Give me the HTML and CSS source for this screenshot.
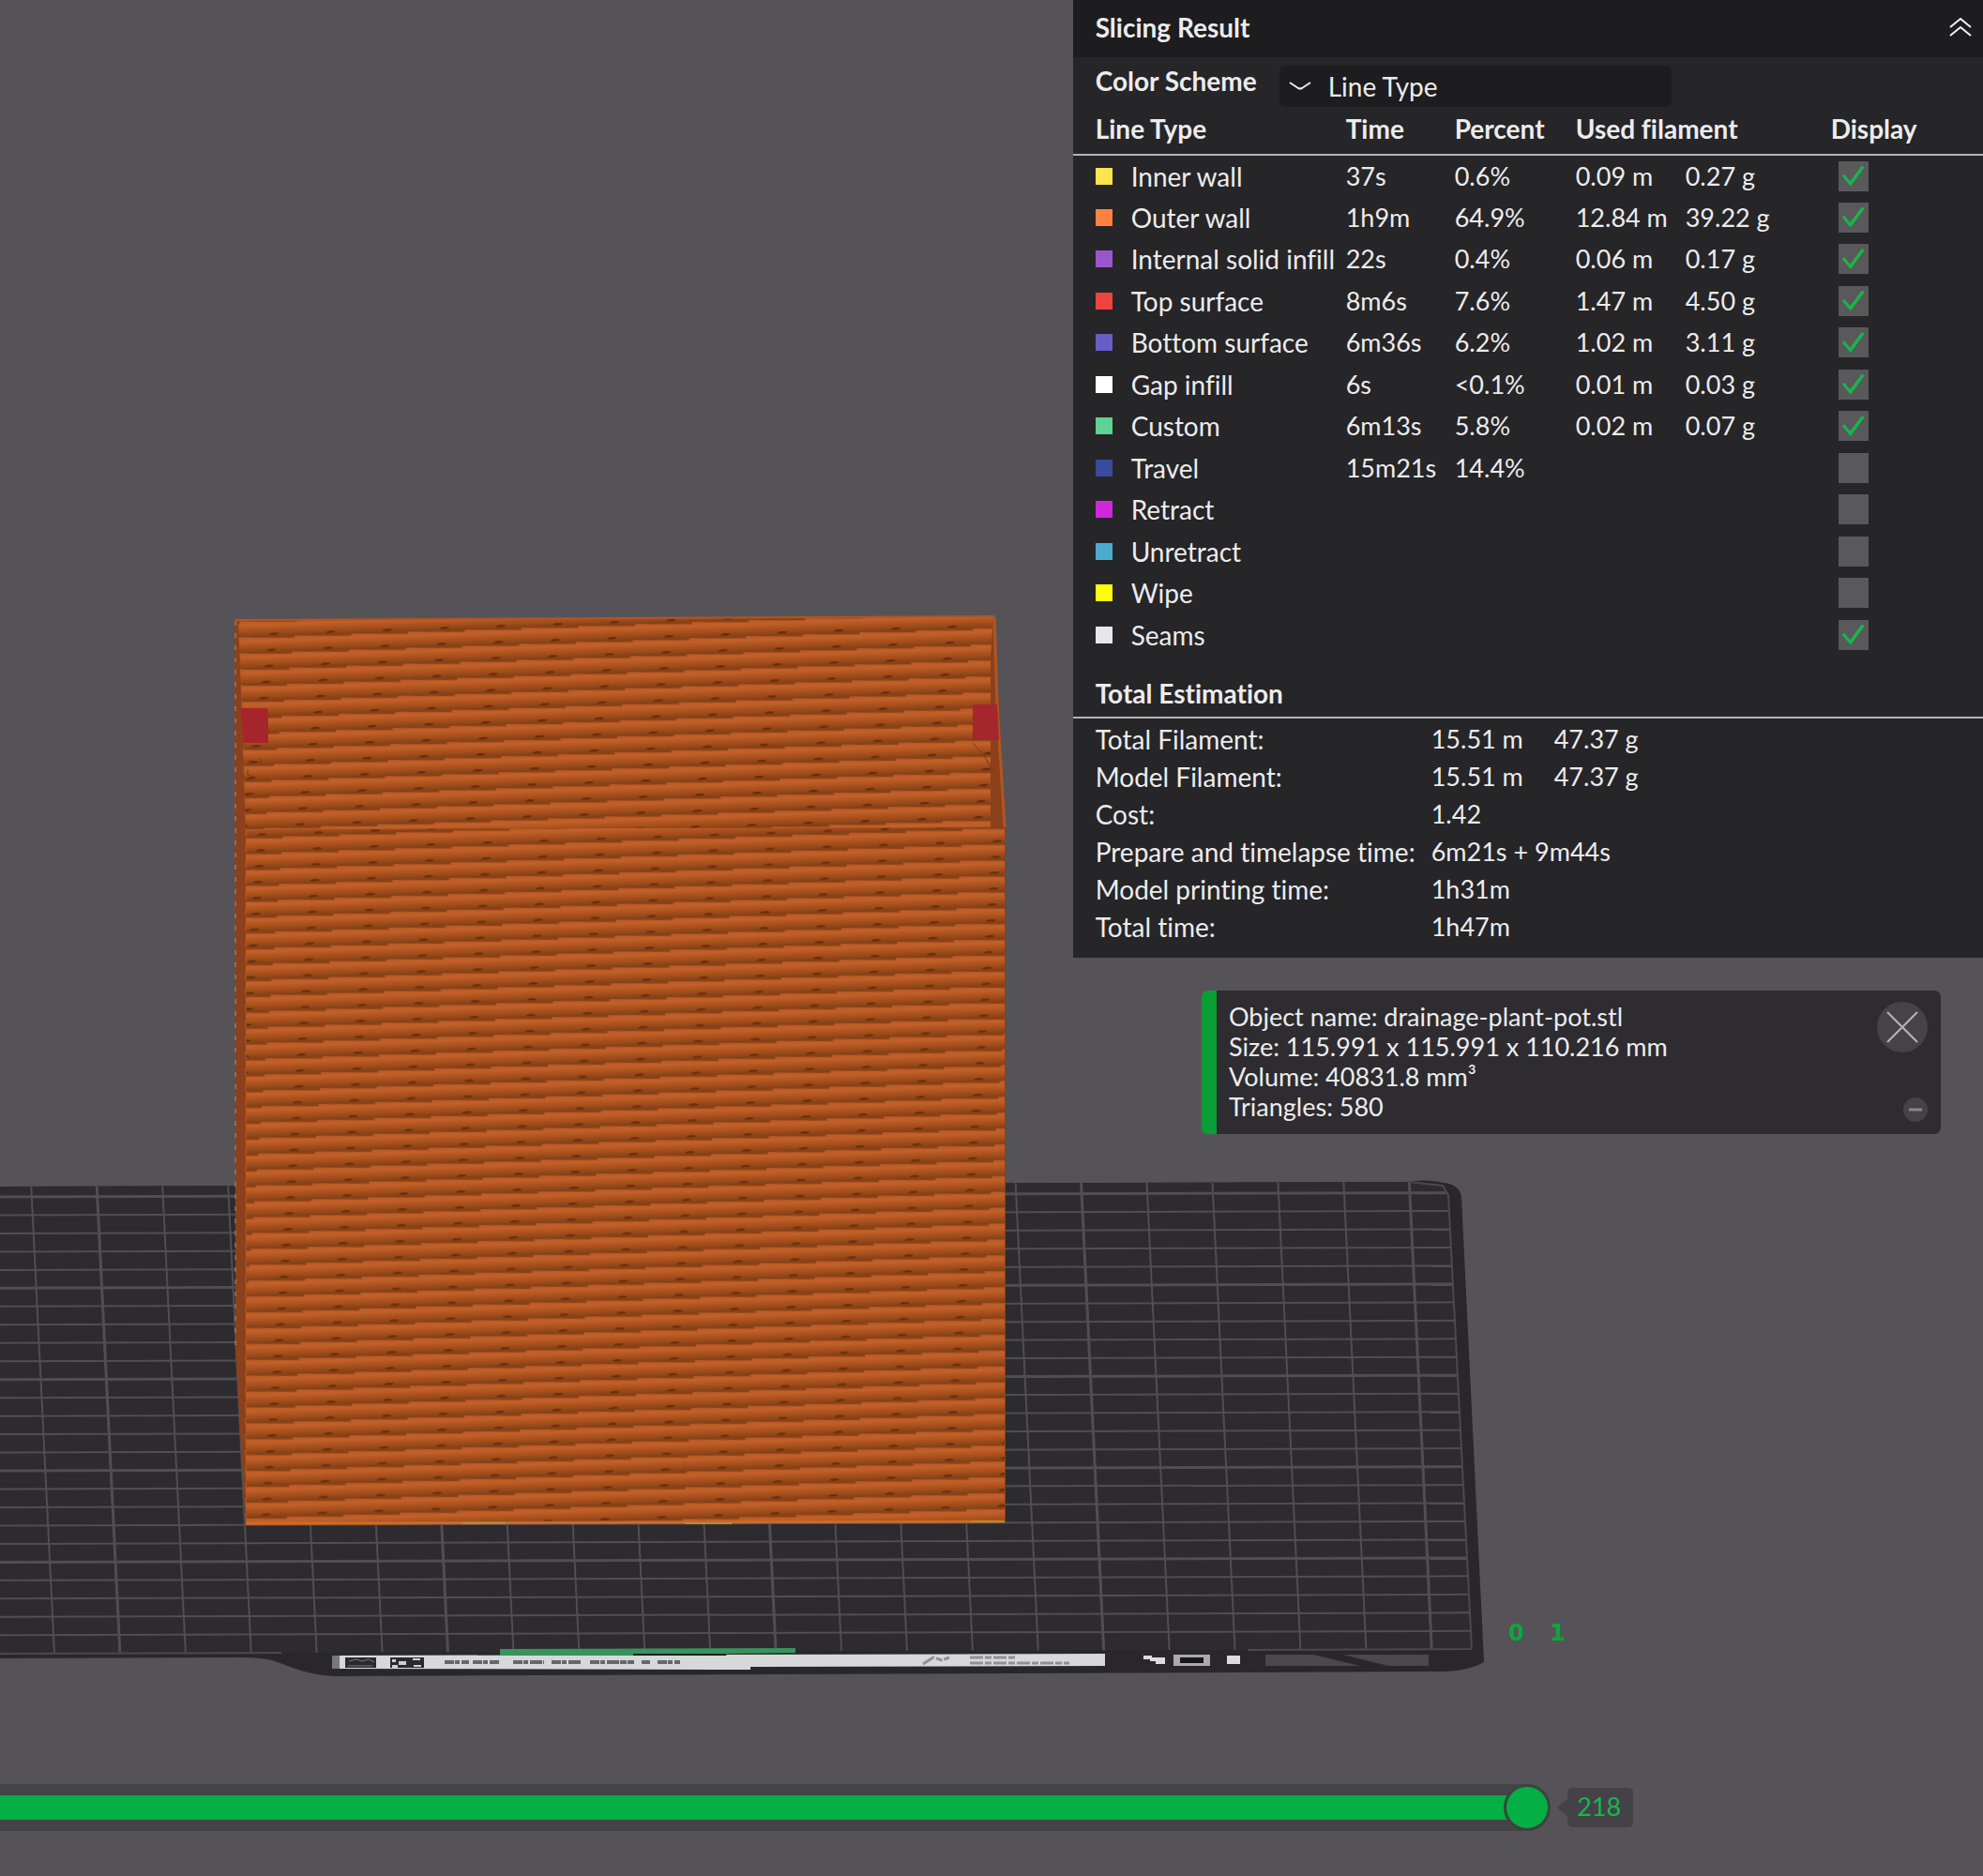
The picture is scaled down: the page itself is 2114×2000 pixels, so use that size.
FILE: index.html
```html
<!DOCTYPE html>
<html lang="en">
<head>
<meta charset="utf-8">
<title>Slicing Result</title>
<link rel="stylesheet" href="styles.css">
</head>
<body>
<main class="viewport">
  <svg class="scene" viewBox="0 0 2114 2000" preserveAspectRatio="xMinYMin meet" aria-hidden="true">
    <defs>
      <linearGradient id="bead" x1="0" y1="0" x2="0" y2="1">
        <stop offset="0" stop-color="#bb5924"/>
        <stop offset=".25" stop-color="#c2602a"/>
        <stop offset=".5" stop-color="#b25520"/>
        <stop offset=".8" stop-color="#97491b"/>
        <stop offset="1" stop-color="#843f16"/>
      </linearGradient>
      <g id="tile">
        <rect width="61" height="17" fill="url(#bead)"/>
        <path d="M0 0V.6L47 2.4V0ZM47 0L61 .6V0Z" fill="#8a4216"/>
        <path d="M19 14.6l3-1.4h5l3 1-3 1.3h-7z" fill="#642e0e"/>
      </g>
      <pattern id="rim" width="60.5" height="17" patternUnits="userSpaceOnUse" patternTransform="matrix(1 -.034 -.16 1.006 270 662)"><use href="#tile"/></pattern>
      <pattern id="wall" width="60.5" height="17" patternUnits="userSpaceOnUse" patternTransform="matrix(1 -.034 -.077 .995 315 891)"><use href="#tile"/></pattern>
      <clipPath id="bedClip"><path d="M0 1265L1500 1260L1537 1262L1544 1272L1569 1758L0 1763Z"/></clipPath>
    </defs>

    <!-- build plate -->
    <path d="M0 1265L1500 1260Q1520 1256 1545 1262Q1557 1266 1558 1276L1582 1772Q1566 1781 1540 1782L355 1787Q330 1785 312 1778L290 1770Q278 1767 250 1767L0 1768Z" fill="#29272b"/>
    <path d="M0 1265L1500 1260L1537 1262L1544 1272L1569 1758L0 1763Z" fill="#2d2a30"/>
    <g id="grid" clip-path="url(#bedClip)" fill="none" stroke="#504e53" stroke-width="2"></g>
    <path d="M1502 1260l36 4 6 10 25 484M0 1763l300 -1M1330 1759l239 -1" fill="none" stroke="#4b494e" stroke-width="2"/>

    <!-- plate label strip -->
    <path d="M354 1765L1178 1763V1776L800 1777V1780L354 1779Z" fill="#d6d8d9"/>
    <path d="M354 1765h8v14h-8z" fill="#77787a"/>
    <path d="M533 1758L848 1757V1762L775 1763V1765H533Z" fill="#38935f"/>
    <path d="M675 1763h99v2h-99z" fill="#17221c"/>
    <path d="M368 1767h33v11h-33zM416 1767h36v11h-36z" fill="#2b2b2e"/>
    <path d="M372 1771l8-2 6 2 7-2 6 3M371 1776h26" fill="none" stroke="#77777a" stroke-width="1"/>
    <path d="M418 1769h4v3h-4zM425 1771h8v4h-8zM440 1768h8v2h-8zM418 1775h6v3h-6zM441 1775h8v2h-8z" fill="#cfcfd1"/>
    <path d="M474 1772H500M504 1772H532M547 1772H580M588 1772H619M629 1772H676M684 1772H693M701 1772H725" stroke="#66676a" stroke-width="4" stroke-dasharray="10 1 5 2 13 1 7 1"/>
    <path d="M984 1774l11-7 9 3 8-3M1034 1767h50M1034 1773h106" fill="none" stroke="#8f9094" stroke-width="3" stroke-dasharray="14 2 7 2"/>
    <path d="M1219 1765h9v2h14v7h-10v-3h-6v-2h-7zM1308 1765h14v9h-14z" fill="#dcdcde"/>
    <path d="M1251 1764h39v12h-39z" fill="#aaaaad"/>
    <path d="M1258 1767h25v6h-25z" fill="#17161a"/>
    <path d="M1349 1764H1523V1776H1349Z" fill="#4a484c"/>
    <path d="M1400 1764H1432L1480 1776H1450Z" fill="#29272b"/>
    <text class="plate-number" x="1608 1652" y="1749">01</text>

    <!-- sliced model -->
    <path d="M250 661L1060 657L1072 884V1623L262 1626L251 1440Z" fill="#8b411b"/>
    <path d="M254 661L1059 657L1056 700V884H1071V890H262V870Z" fill="url(#rim)"/>
    <path d="M262 884L1071 882V1623L262 1626Z" fill="url(#wall)"/>
    <path d="M251 661L1060 657" stroke="#b35523" stroke-width="2"/>
    <path d="M1060 658L1063 752L1071 882" fill="none" stroke="#b45521" stroke-width="3"/>
    <path d="M251 662V1440" stroke="#a99282" stroke-width="1" stroke-dasharray="5 8"/>
    <path d="M256 662L262 884V1620" fill="none" stroke="#b15a28" stroke-width="1" stroke-dasharray="9 8"/>
    <path d="M262 1624L1071 1622" stroke="#c96c29" stroke-width="3"/>
    <path d="M493 1624h46M730 1624h50M1035 1622h36" stroke="#b98931" stroke-width="2"/>
    <path d="M1037 792l11 12 12 20M264 811h6M276 808l3 4-3 2M264 820v6l7 2M264 846h7M265 862h4" fill="none" stroke="#7a3a14" stroke-width="1"/>
    <path d="M257 755h28l1 8v29h-27z" fill="#a6252d"/>
    <path d="M1037 751h26l2 38h-28z" fill="#a3272c"/>
  </svg>

  <aside class="panel">
    <header class="panel-head">
      <h1>Slicing Result</h1>
      <button class="collapse" aria-label="Collapse">
        <svg width="24" height="20" viewBox="0 0 24 20"><path d="M1 10L12 1l11 9M1 19l11-9 11 9" fill="none" stroke="#f2f2f2" stroke-width="2"/></svg>
      </button>
    </header>
    <div class="scheme">
      <label for="scheme">Color Scheme</label>
      <div class="picker">
        <select id="scheme"><option>Line Type</option></select>
        <svg width="24" height="10" viewBox="0 0 24 10"><path d="M1 1L10 7Q12 8 14 7L23 1" fill="none" stroke="#eee" stroke-width="2"/></svg>
      </div>
    </div>
    <table class="lines">
      <colgroup><col class="c-name"><col class="c-time"><col class="c-percent"><col class="c-length"><col class="c-weight"><col class="c-show"></colgroup>
      <thead><tr><th>Line Type</th><th>Time</th><th>Percent</th><th colspan="2">Used filament</th><th class="show-head">Display</th></tr></thead>
      <tbody>
        <tr><td><label for="l1"><i class="swatch inner"></i>Inner wall</label></td><td>37s</td><td>0.6%</td><td>0.09 m</td><td>0.27 g</td><td><input type="checkbox" id="l1" checked></td></tr>
        <tr><td><label for="l2"><i class="swatch outer"></i>Outer wall</label></td><td>1h9m</td><td>64.9%</td><td>12.84 m</td><td>39.22 g</td><td><input type="checkbox" id="l2" checked></td></tr>
        <tr><td><label for="l3"><i class="swatch solid"></i>Internal solid infill</label></td><td>22s</td><td>0.4%</td><td>0.06 m</td><td>0.17 g</td><td><input type="checkbox" id="l3" checked></td></tr>
        <tr><td><label for="l4"><i class="swatch top"></i>Top surface</label></td><td>8m6s</td><td>7.6%</td><td>1.47 m</td><td>4.50 g</td><td><input type="checkbox" id="l4" checked></td></tr>
        <tr><td><label for="l5"><i class="swatch bottom"></i>Bottom surface</label></td><td>6m36s</td><td>6.2%</td><td>1.02 m</td><td>3.11 g</td><td><input type="checkbox" id="l5" checked></td></tr>
        <tr><td><label for="l6"><i class="swatch gap"></i>Gap infill</label></td><td>6s</td><td>&lt;0.1%</td><td>0.01 m</td><td>0.03 g</td><td><input type="checkbox" id="l6" checked></td></tr>
        <tr><td><label for="l7"><i class="swatch custom"></i>Custom</label></td><td>6m13s</td><td>5.8%</td><td>0.02 m</td><td>0.07 g</td><td><input type="checkbox" id="l7" checked></td></tr>
        <tr><td><label for="l8"><i class="swatch travel"></i>Travel</label></td><td>15m21s</td><td>14.4%</td><td></td><td></td><td><input type="checkbox" id="l8"></td></tr>
        <tr><td><label for="l9"><i class="swatch retract"></i>Retract</label></td><td></td><td></td><td></td><td></td><td><input type="checkbox" id="l9"></td></tr>
        <tr><td><label for="l10"><i class="swatch unretract"></i>Unretract</label></td><td></td><td></td><td></td><td></td><td><input type="checkbox" id="l10"></td></tr>
        <tr><td><label for="l11"><i class="swatch wipe"></i>Wipe</label></td><td></td><td></td><td></td><td></td><td><input type="checkbox" id="l11"></td></tr>
        <tr><td><label for="l12"><i class="swatch seams"></i>Seams</label></td><td></td><td></td><td></td><td></td><td><input type="checkbox" id="l12" checked></td></tr>
      </tbody>
    </table>
    <h2>Total Estimation</h2>
    <table class="totals">
      <colgroup><col class="c-label"><col class="c-value"><col></colgroup>
      <tbody>
        <tr><th>Total Filament:</th><td>15.51 m</td><td>47.37 g</td></tr>
        <tr><th>Model Filament:</th><td>15.51 m</td><td>47.37 g</td></tr>
        <tr><th>Cost:</th><td colspan="2">1.42</td></tr>
        <tr><th>Prepare and timelapse time:</th><td colspan="2">6m21s + 9m44s</td></tr>
        <tr><th>Model printing time:</th><td colspan="2">1h31m</td></tr>
        <tr><th>Total time:</th><td colspan="2">1h47m</td></tr>
      </tbody>
    </table>
  </aside>

  <section class="notice">
    <div class="notice-text">
      <p>Object name: drainage-plant-pot.stl</p>
      <p>Size: 115.991 x 115.991 x 110.216 mm</p>
      <p>Volume: 40831.8 mm³</p>
      <p>Triangles: 580</p>
    </div>
    <div class="notice-actions">
      <button class="close" aria-label="Close"><svg width="34" height="34" viewBox="0 0 34 34"><path d="M1 1l32 32M33 1L1 33" stroke="#b5b3b6" stroke-width="2"/></svg></button>
      <button class="minimize" aria-label="Minimize"><svg width="14" height="4" viewBox="0 0 14 4"><path d="M0 2h14" stroke="#89878b" stroke-width="3"/></svg></button>
    </div>
  </section>

  <footer class="moves">
    <input type="range" id="move" min="0" max="218" value="218" aria-label="Move">
    <output for="move">218</output>
  </footer>
</main>
<script src="grid.js"></script>
</body>
</html>
```
FILE: styles.css
```css
* { box-sizing: border-box; }

body {
  margin: 0;
  background: #565358;
  color: #ececed;
  font-family: Lato, "Noto Sans", sans-serif;
  font-size: 27px;
  line-height: 32px;
  font-variant-ligatures: none;
}

h1, h2, p { margin: 0; }
h1, h2, th { font-size: 28px; font-weight: 700; line-height: 32px; text-align: left; }
button { border: 0; padding: 0; display: grid; place-items: center; cursor: pointer; }
svg { display: block; }

.viewport {
  position: relative;
  min-height: 100vh;
  display: flex;
  flex-direction: column;
}

/* 3D canvas lies behind the panels */
.scene { position: absolute; top: 0; left: 0; width: 100%; }
.plate-number { font: 700 24px "DejaVu Sans", sans-serif; fill: #0ca63c; }
.panel, .notice, .moves { position: relative; }

.panel {
  align-self: flex-end;
  width: 45.9%;
  padding-bottom: 13px;
  background: #262528;
}
.panel-head {
  display: flex;
  align-items: center;
  justify-content: space-between;
  height: 61px;
  padding: 0 12px 4px 24px;
  background: #1d1c1f;
}
.collapse { background: none; }

.scheme { display: flex; gap: 20px; padding: 9px 24px 0; height: 55px; }
.scheme label { font-size: 28px; font-weight: 700; width: 176px; white-space: nowrap; }
.picker { display: grid; width: 418px; height: 44px; align-items: center; }
.picker > * { grid-area: 1 / 1; }
.picker svg { margin-left: 10px; pointer-events: none; }
select {
  appearance: none;
  width: 100%;
  height: 44px;
  padding: 0 52px;
  border: 0;
  border-radius: 6px;
  background: #1d1c1f;
  color: inherit;
  font: inherit;
  font-size: 28px;
}

table { width: 100%; border-collapse: collapse; table-layout: fixed; }
th, td { padding: 0; white-space: nowrap; }
.lines th:first-child, .lines td:first-child, .totals th { padding-left: 24px; }
.c-name { width: 291px; }
.c-time { width: 116px; }
.c-percent { width: 129px; }
.c-length { width: 117px; }
.c-weight { width: 155px; }
.lines thead th { height: 49px; padding-bottom: 6px; border-bottom: 2px solid #b4b3b5; }
.lines tbody td { height: 44px; }
.lines tbody tr:nth-child(2n) td { height: 45px; }
.lines label { display: flex; align-items: center; gap: 20px; font-size: 28px; }
.lines input {
  appearance: none;
  display: grid;
  place-items: center;
  width: 32px;
  height: 32px;
  margin: 0 0 0 8px;
  background: #59585b;
}
.lines input:checked::after {
  content: "";
  width: 24px;
  height: 22px;
  background: #15b84a;
  clip-path: polygon(0 50%, 10% 42%, 36% 76%, 88% 0, 100% 8%, 38% 100%);
}

.swatch { width: 18px; height: 18px; }
.inner { background: #fbe44c; }
.outer { background: #fd8140; }
.solid { background: #9b56cf; }
.top { background: #ed4440; }
.bottom { background: #665dc5; }
.gap { background: #fff; }
.custom { background: #5bd393; }
.travel { background: #3a4a9c; }
.retract { background: #d026dc; }
.unretract { background: #4caccf; }
.wipe { background: #fefe08; }
.seams { background: #e7e6e9; }

h2 { height: 67px; padding: 24px 24px 0; border-bottom: 2px solid #b4b3b5; }
.totals { margin-top: 2px; }
.totals th { font-weight: 400; }
.totals th, .totals td { height: 40px; }
.c-label { width: 382px; }
.c-value { width: 131px; }

.notice {
  align-self: flex-end;
  display: flex;
  justify-content: space-between;
  width: 788px;
  max-width: 100%;
  margin: 35px 45px 0 0;
  padding: 12px 14px 13px 13px;
  border-left: 16px solid #0a9f35;
  border-radius: 7px;
  background: #2e2c31;
}
.notice-actions { display: flex; flex-direction: column; align-items: flex-end; justify-content: space-between; }
.close { width: 54px; height: 54px; border-radius: 50%; background: #454347; }
.minimize { width: 26px; height: 26px; border-radius: 50%; background: #454347; }

.moves { display: flex; align-items: center; gap: 18px; margin-top: auto; padding-bottom: 48px; }
.moves input {
  appearance: none;
  width: 78.2%;
  height: 50px;
  margin: 0;
  border-radius: 0 25px 25px 0;
  background: linear-gradient(#444346 12px, #04b043 12px 38px, #444346 38px);
}
.moves input::-webkit-slider-thumb {
  appearance: none;
  width: 50px;
  height: 50px;
  border: 3px solid #3d4241;
  border-radius: 50%;
  background: #04b043;
}
.moves output {
  position: relative;
  height: 42px;
  padding: 0 13px 0 10px;
  border-radius: 5px;
  background: #444247;
  color: #18b552;
  line-height: 40px;
}
.moves output::before {
  content: "";
  position: absolute;
  left: -11px;
  top: 12px;
  border: solid transparent;
  border-width: 9px 11px 9px 0;
  border-right-color: #444247;
}
```
FILE: grid.js
```js
// Draws the 10 mm grid of the build plate; every fifth line is heavier.
const grid = document.getElementById("grid");

function addLine(x1, y1, x2, y2, major) {
  const line = document.createElementNS("http://www.w3.org/2000/svg", "path");
  line.setAttribute("d", `M${x1} ${y1}L${x2} ${y2}`);
  if (major) line.setAttribute("stroke-width", "3");
  grid.append(line);
}

for (let i = 0; i < 25; i++) {
  const y = 1276 + 19.47 * i;
  addLine(0, y, 1570, y - 4.5, i % 5 === 0);
}
for (let i = 0; i < 22; i++) {
  addLine(33 + 69.97 * i, 1260, 58 + 69.93 * i, 1763, i % 5 === 1);
}
```
